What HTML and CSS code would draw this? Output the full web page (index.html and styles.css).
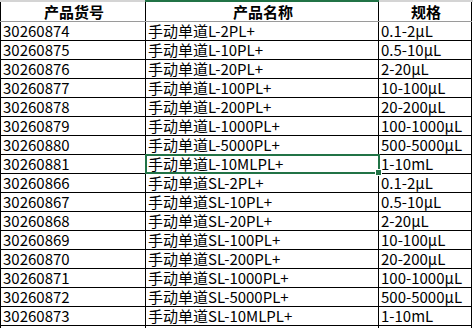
FILE: index.html
```html
<!DOCTYPE html>
<html lang="zh-CN">
<head>
    <meta charset="UTF-8">
    <title>手动单道移液器</title>
    <link rel="stylesheet" href="styles.css">
</head>
<body class="body">
<div class="colbar">
    <span class="colbar-a"></span>
    <span class="colbar-b"></span>
    <span class="colbar-c"></span>
</div>
<table class="sheet">
    <colgroup>
        <col class="col-a">
        <col class="col-b">
        <col class="col-c">
    </colgroup>
    <tr class="head">
        <th>产品货号</th>
        <th>产品名称</th>
        <th>规格</th>
    </tr>
    <tr><td>30260874</td><td>手动单道L-2PL+</td><td>0.1-2μL</td></tr>
    <tr><td>30260875</td><td>手动单道L-10PL+</td><td>0.5-10μL</td></tr>
    <tr><td>30260876</td><td>手动单道L-20PL+</td><td>2-20μL</td></tr>
    <tr><td>30260877</td><td>手动单道L-100PL+</td><td>10-100μL</td></tr>
    <tr><td>30260878</td><td>手动单道L-200PL+</td><td>20-200μL</td></tr>
    <tr><td>30260879</td><td>手动单道L-1000PL+</td><td>100-1000μL</td></tr>
    <tr><td>30260880</td><td>手动单道L-5000PL+</td><td>500-5000μL</td></tr>
    <tr><td>30260881</td><td class="sel">手动单道L-10MLPL+<span class="sel-box"><span class="sel-handle"></span></span></td><td>1-10mL</td></tr>
    <tr><td>30260866</td><td>手动单道SL-2PL+</td><td>0.1-2μL</td></tr>
    <tr><td>30260867</td><td>手动单道SL-10PL+</td><td>0.5-10μL</td></tr>
    <tr><td>30260868</td><td>手动单道SL-20PL+</td><td>2-20μL</td></tr>
    <tr><td>30260869</td><td>手动单道SL-100PL+</td><td>10-100μL</td></tr>
    <tr><td>30260870</td><td>手动单道SL-200PL+</td><td>20-200μL</td></tr>
    <tr><td>30260871</td><td>手动单道SL-1000PL+</td><td>100-1000μL</td></tr>
    <tr><td>30260872</td><td>手动单道SL-5000PL+</td><td>500-5000μL</td></tr>
    <tr><td>30260873</td><td>手动单道SL-10MLPL+</td><td>1-10mL</td></tr>
    <tr class="cut"><td></td><td></td><td></td></tr>
</table>
</body>
</html>
```

FILE: styles.css
```css
.body{
    margin:0;
    background:#fff;
    font-family:"Noto Sans CJK SC","Liberation Sans",sans-serif;
    color:#000;
}
.colbar{
    display:flex;
    height:2px;
}
.colbar-a{
    width:145px;
    background:#d4d4d4;
}
.colbar-b{
    width:234px;
    background:#217346;
}
.colbar-c{
    flex:1;
    background:#d4d4d4;
}
.sheet{
    border-collapse:collapse;
    table-layout:fixed;
    width:471px;
}
.col-a{
    width:145px;
}
.col-b{
    width:233px;
}
.col-c{
    width:93px;
}
.sheet th,
.sheet td{
    border-left:1px solid #000;
    border-right:1px solid #000;
    border-bottom:1px solid #000;
    padding:0 0 0 2px;
    height:18px;
    font-size:15px;
    line-height:18px;
    white-space:nowrap;
    overflow:visible;
    vertical-align:bottom;
    text-align:left;
}
.sheet th{
    height:19px;
    font-weight:bold;
    text-align:center;
    border-bottom-color:#9a9a9a;
}
.sheet .cut td{
    height:4px;
    border-bottom:none;
}
.sheet .sel{
    position:relative;
}
.sel-box{
    position:absolute;
    left:-1px;
    top:-1px;
    right:-2px;
    bottom:-1px;
    border:2px solid #217346;
}
.sel-handle{
    position:absolute;
    right:-4px;
    bottom:-4px;
    width:5px;
    height:5px;
    background:#217346;
    border:1px solid #fff;
}
```
